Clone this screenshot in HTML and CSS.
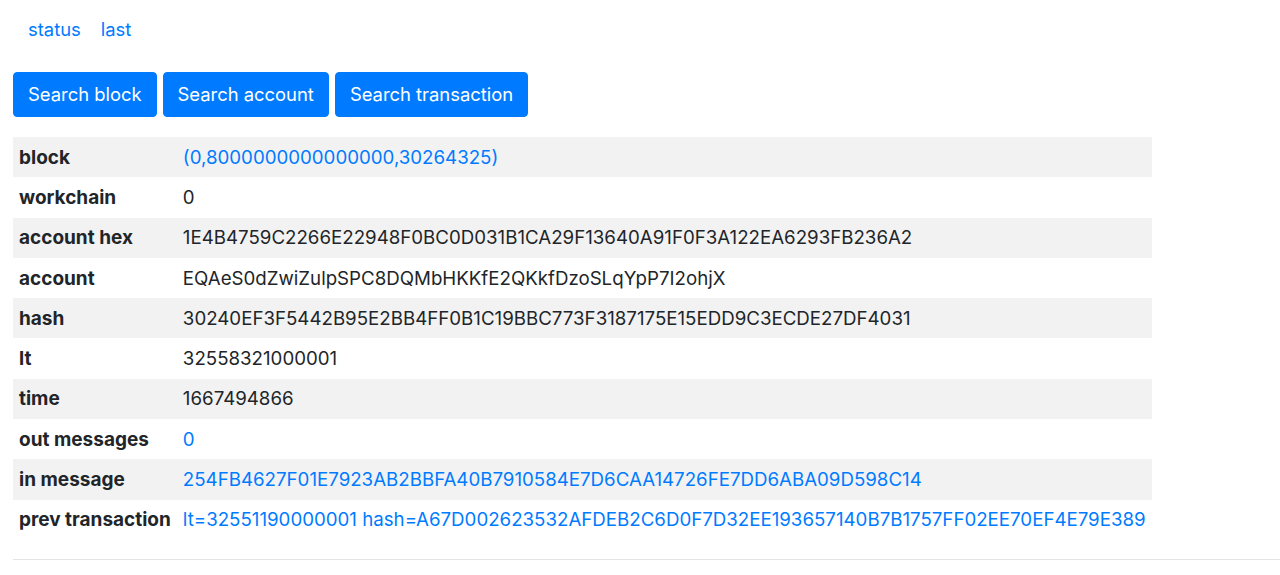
FILE: index.html
```html
<!DOCTYPE html>
<html lang="en">
<head>
    <meta charset="UTF-8">
    <meta name="viewport" content="width=device-width, initial-scale=1.0">
    <title>Transaction</title>
    <link rel="stylesheet" href="styles.css">
</head>
<body>
    <nav class="top-nav">
        <a href="#" class="nav-link">status</a>
        <a href="#" class="nav-link">last</a>
    </nav>
    <div class="search-buttons">
        <button class="btn">Search block</button>
        <button class="btn">Search account</button>
        <button class="btn">Search transaction</button>
    </div>
    <table class="info-table">
        <tbody>
            <tr><th>block</th><td><a href="#">(0,8000000000000000,30264325)</a></td></tr>
            <tr><th>workchain</th><td>0</td></tr>
            <tr><th>account hex</th><td>1E4B4759C2266E22948F0BC0D031B1CA29F13640A91F0F3A122EA6293FB236A2</td></tr>
            <tr><th>account</th><td>EQAeS0dZwiZulpSPC8DQMbHKKfE2QKkfDzoSLqYpP7I2ohjX</td></tr>
            <tr><th>hash</th><td>30240EF3F5442B95E2BB4FF0B1C19BBC773F3187175E15EDD9C3ECDE27DF4031</td></tr>
            <tr><th>lt</th><td>32558321000001</td></tr>
            <tr><th>time</th><td>1667494866</td></tr>
            <tr><th>out messages</th><td><a href="#">0</a></td></tr>
            <tr><th>in message</th><td><a href="#">254FB4627F01E7923AB2BBFA40B7910584E7D6CAA14726FE7DD6ABA09D598C14</a></td></tr>
            <tr><th>prev transaction</th><td><a href="#">lt=32551190000001 hash=A67D002623532AFDEB2C6D0F7D32EE193657140B7B1757FF02EE70EF4E79E389</a></td></tr>
        </tbody>
    </table>
    <hr class="divider">
</body>
</html>
```

FILE: styles.css
```css
html, body {
    margin: 0;
    padding: 0;
}
body {
    padding-left: 13px;
    font-family: Inter, 'Liberation Sans', sans-serif;
    font-size: 18.4px;
    color: #212529;
    background: #fff;
}
a {
    color: #007bff;
    text-decoration: none;
}
.top-nav {
    display: flex;
    gap: 20px;
    padding: 16px 0 0 15px;
    height: 27px;
    line-height: 27px;
}
.nav-link {
    display: block;
}
.search-buttons {
    display: flex;
    gap: 6px;
    margin-top: 29px;
}
.btn {
    font-family: inherit;
    font-size: 18.4px;
    line-height: 27px;
    height: 45px;
    color: #fff;
    background-color: #007bff;
    border: 1px solid #007bff;
    border-radius: 4px;
    padding: 0 14px 1px;
    cursor: pointer;
}
.info-table {
    border-collapse: collapse;
    margin-top: 20px;
    font-size: 18.7px;
}
.info-table th,
.info-table td {
    text-align: left;
    padding: 0 6px;
    height: 40.3px;
    line-height: 27px;
    white-space: nowrap;
}
.info-table th {
    font-weight: 700;
    font-size: 19px;
}
.info-table td {
    font-weight: 400;
}
.info-table tr:nth-child(odd) {
    background-color: #f2f2f2;
}
.divider {
    border: 0;
    border-top: 1px solid #e5e5e5;
    margin: 19px 0 0;
}
```
